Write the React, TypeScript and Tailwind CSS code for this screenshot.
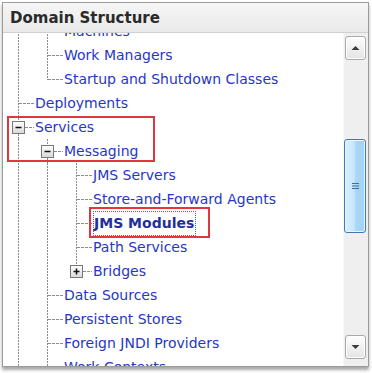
import React from "react";

type Conn = "tee" | "end" | "minus" | "plus";
type Row = { label: string; guides: boolean[]; conn: Conn; selected?: boolean };

const rows: Row[] = [
  { label: "Machines", guides: [true], conn: "tee" },
  { label: "Work Managers", guides: [true], conn: "tee" },
  { label: "Startup and Shutdown Classes", guides: [true], conn: "end" },
  { label: "Deployments", guides: [], conn: "tee" },
  { label: "Services", guides: [], conn: "minus" },
  { label: "Messaging", guides: [true], conn: "minus" },
  { label: "JMS Servers", guides: [true, true], conn: "tee" },
  { label: "Store-and-Forward Agents", guides: [true, true], conn: "tee" },
  { label: "JMS Modules", guides: [true, true], conn: "tee", selected: true },
  { label: "Path Services", guides: [true, true], conn: "tee" },
  { label: "Bridges", guides: [true, true], conn: "plus" },
  { label: "Data Sources", guides: [true], conn: "tee" },
  { label: "Persistent Stores", guides: [true], conn: "tee" },
  { label: "Foreign JNDI Providers", guides: [true], conn: "tee" },
  { label: "Work Contexts", guides: [true], conn: "tee" },
];

const LINE = "#8c8c8c";
const VD = "2 1";
const HD = "3 1";

function Guide({ on }: { on: boolean }) {
  return (
    <svg width="29" height="24" className="shrink-0 block">
      {on && <line x1="15.5" y1="0" x2="15.5" y2="24" stroke={LINE} strokeWidth="1" strokeDasharray={VD} />}
    </svg>
  );
}

function Connector({ kind }: { kind: Conn }) {
  const box = kind === "minus" || kind === "plus";
  return (
    <svg width="32" height="24" className="shrink-0 block">
      {kind === "tee" && <line x1="15.5" y1="0" x2="15.5" y2="24" stroke={LINE} strokeDasharray={VD} />}
      {kind === "end" && <line x1="15.5" y1="0" x2="15.5" y2="13" stroke={LINE} strokeDasharray={VD} />}
      {kind === "minus" && (
        <>
          <line x1="15.5" y1="0" x2="15.5" y2="6" stroke={LINE} strokeDasharray={VD} />
          <line x1="15.5" y1="19" x2="15.5" y2="24" stroke={LINE} strokeDasharray={VD} />
        </>
      )}
      {kind === "plus" && <line x1="15.5" y1="0" x2="15.5" y2="6" stroke={LINE} strokeDasharray={VD} />}
      <line x1={box ? 22 : 16} y1="12.5" x2="31" y2="12.5" stroke={LINE} strokeDasharray={HD} />
      {box && (
        <>
          <defs>
            <linearGradient id={`bx-${kind}`} x1="0" y1="0" x2="0" y2="1">
              <stop offset="0" stopColor="#ffffff" />
              <stop offset="1" stopColor="#d8d8d8" />
            </linearGradient>
          </defs>
          <rect x="9.5" y="6.5" width="12" height="12" fill={`url(#bx-${kind})`} stroke="#777777" strokeWidth="1" />
          <line x1="12.5" y1="12.5" x2="18.5" y2="12.5" stroke="#111111" strokeWidth="1.5" />
          {kind === "plus" && <line x1="15.5" y1="9.5" x2="15.5" y2="15.5" stroke="#111111" strokeWidth="1.5" />}
        </>
      )}
    </svg>
  );
}

function TreeRow({ row }: { row: Row }) {
  return (
    <div className="flex h-[24px] items-center">
      {row.guides.map((g, i) => (
        <Guide key={i} on={g} />
      ))}
      <Connector kind={row.conn} />
      {row.selected ? (
        <span className="h-[25px] leading-[23px] border border-dotted border-[#4a5fae] pr-[1px] font-bold text-[#1f2f9c] whitespace-nowrap">
          {row.label}
        </span>
      ) : (
        <span className="leading-[24px] text-[#2637c4] whitespace-nowrap">{row.label}</span>
      )}
    </div>
  );
}

function ScrollButton({ up }: { up: boolean }) {
  return (
    <div className="ml-[1px] w-[21px] h-[24px] rounded-[3px] border border-[#a9a9a9] bg-[linear-gradient(#fdfdfd,#e4e4e4)] flex items-center justify-center shadow-[inset_0_0_0_1px_#ffffff]">
      <svg width="9" height="6" viewBox="0 0 9 6">
        {up ? <path d="M0.5 5 L4.5 1 L8.5 5 Z" fill="#3a3a3a" /> : <path d="M0.5 1 L4.5 5 L8.5 1 Z" fill="#3a3a3a" />}
      </svg>
    </div>
  );
}

export default function App() {
  return (
    <div className="relative w-[372px] h-[373px] bg-white pl-[2px] pt-[2px] font-['DejaVu_Sans',sans-serif]">
      <div className="w-[367px] h-[365px] border border-[#9c9c9c] flex flex-col bg-white shadow-[0_3px_3px_rgba(0,0,0,0.35)]">
        <div className="h-[30px] shrink-0 border-b border-[#d0d0d0] bg-[linear-gradient(#f6f6f6,#e9e9e9)] flex items-center pl-[7px] pt-[1px]">
          <span className="text-[15px] font-bold text-[#2a2a2a]">Domain Structure</span>
        </div>
        <div className="flex flex-1 min-h-0">
          <div className="flex-1 min-w-0 overflow-hidden text-[14px]">
            <div className="-mt-[14px]">
              {rows.map((r, i) => (
                <TreeRow key={i} row={r} />
              ))}
            </div>
          </div>
          <div className="w-[25px] shrink-0 bg-[#efefef] border-l border-[#f7f7f7] flex flex-col pt-[3px] pb-[7px]">
            <ScrollButton up />
            <div className="h-[79px]" />
            <div className="w-[22px] h-[94px] rounded-[3px] border border-[#3d7ab8] bg-[linear-gradient(90deg,#d9efff_0%,#c6e6fb_45%,#a9d6f5_55%,#a4d2f3_100%)] shadow-[inset_0_0_0_1px_#eaf6ff] flex items-center justify-center">
              <svg width="9" height="8" viewBox="0 0 9 8">
                <line x1="1" y1="1.5" x2="8" y2="1.5" stroke="#3b6f9e" />
                <line x1="1" y1="4" x2="8" y2="4" stroke="#3b6f9e" />
                <line x1="1" y1="6.5" x2="8" y2="6.5" stroke="#3b6f9e" />
              </svg>
            </div>
            <div className="flex-1" />
            <ScrollButton up={false} />
          </div>
        </div>
      </div>
      <div className="absolute left-[7px] top-[116px] w-[148px] h-[46px] border-2 border-[#e2363f]" />
      <div className="absolute left-[89px] top-[207px] w-[121px] h-[31px] border-2 border-[#e2363f]" />
    </div>
  );
}
